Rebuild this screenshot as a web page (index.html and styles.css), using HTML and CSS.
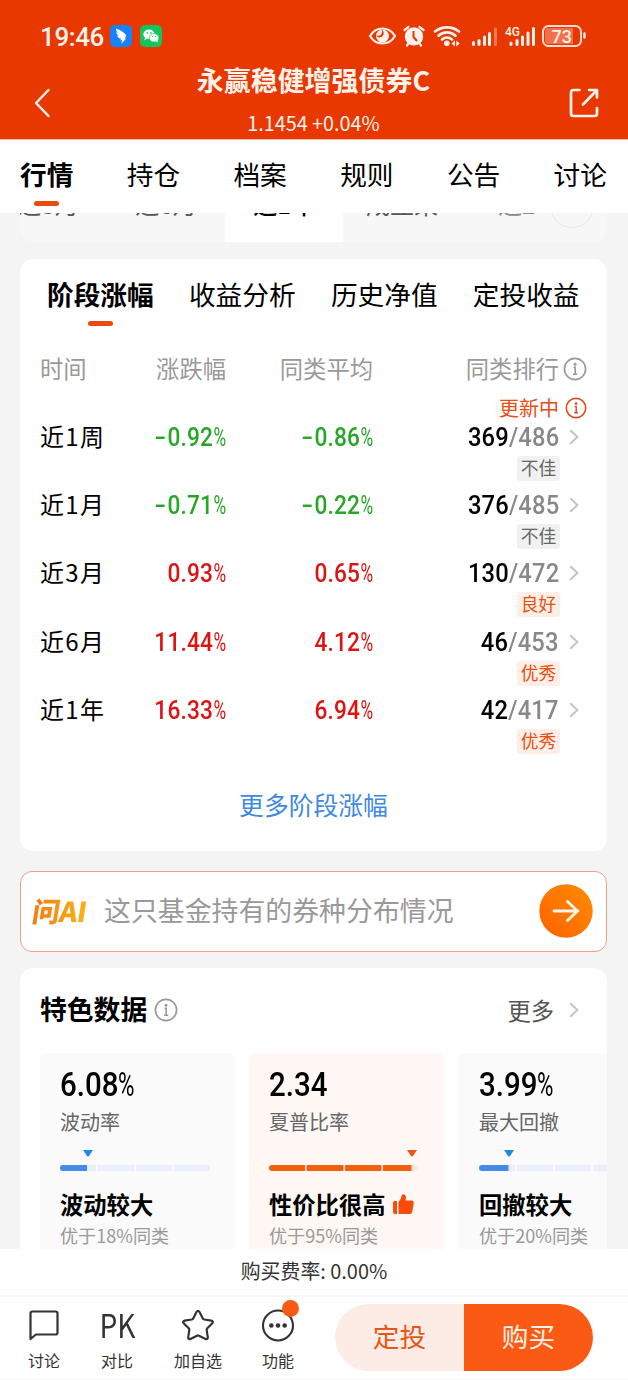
FILE: index.html
```html
<!DOCTYPE html>
<html lang="zh-CN">
<head>
<meta charset="utf-8">
<title>永赢稳健增强债券C</title>
<link rel="stylesheet" href="styles.css">
</head>
<body>
<svg class="defs" width="0" height="0">
  <symbol id="info" viewBox="0 0 24 24"><circle cx="12" cy="12" r="10.6" fill="none" stroke="currentColor" stroke-width="1.7"/><circle cx="12" cy="7.2" r="1.5" fill="currentColor"/><path d="M10.600 10.400H12.200v6.600M10 17.200h4.200" fill="none" stroke="currentColor" stroke-width="1.600"/></symbol>
  <symbol id="chev" viewBox="0 0 10 16"><path d="M1.2 1.2 8.4 8 1.2 14.8" fill="none" stroke="currentColor" stroke-width="2"/></symbol>
</svg>
<header class="top">
  <div class="status">
    <span class="clock">19:46</span>
    <svg class="app" viewBox="0 0 22 22"><rect width="22" height="22" rx="5" fill="#1683fb"/><path d="M6 3.4C10 5 15 7.600 16 10c.4 1.300-.6 2.400-1.400 3.400h1.600l-4.900 5.400.8-3.600h-1.700l.7-1.500C8.600 13.300 7.500 12 7.300 10.700l1.600.2C7.200 9.700 6.300 8.400 6.300 7l1.700.7C6.400 6.300 5.900 5 6 3.400z" fill="#fff"/></svg>
    <svg class="app app-chat" viewBox="0 0 22 22"><rect width="22" height="22" rx="5" fill="#14c55c"/><ellipse cx="9" cy="9.300" rx="5.600" ry="4.800" fill="#fff"/><path d="m5.200 12.500-.8 2.700 3-1.600z" fill="#fff"/><ellipse cx="14" cy="12.800" rx="4.900" ry="4.200" fill="#fff" stroke="#14c55c" stroke-width=".7"/><path d="m15.500 16 2.400 1.200-.5-2.200z" fill="#fff"/><g fill="#14c55c"><circle cx="7.200" cy="7.900" r=".8"/><circle cx="10.900" cy="7.900" r=".8"/><circle cx="12.500" cy="11.600" r=".7"/><circle cx="15.600" cy="11.600" r=".7"/></g></svg>
    <svg class="sys" width="220" height="26" viewBox="0 0 220 26">
      <path d="M2 13C8 3 21 3 27 13 21 23 8 23 2 13Z" fill="none" stroke="#fff2ea" stroke-width="2.200"/>
      <circle cx="14.500" cy="13" r="6.500" fill="#fff2ea"/><path d="M13.500 6.500a4.200 4.200 0 1 1-5.500 6q4 1.200 5.500-1.500 1-2 0-4.500z" fill="#e93700"/>
      <g fill="none" stroke="#fff2ea" stroke-linecap="round">
        <path d="m36.500 7 4-3M51.500 4l4 3M40.500 20.500l-1.500 2M51.500 20.500l1.500 2" stroke-width="2.200"/>
        <path d="M67 8.500c7-5.500 17-5.500 24 0M70.500 12.700c5-4.500 12-4.500 17 0M74 16.500c3-2.500 7-2.500 10 0" stroke-width="2.700"/>
      </g>
      <circle cx="46" cy="13.400" r="9.200" fill="#fff2ea"/><path d="M45.500 8v6l3.500 4" fill="none" stroke="#e93700" stroke-width="2"/>
      <circle cx="78.800" cy="20.300" r="2.800" fill="#fff2ea"/><path d="m83.500 20.500 3.500-3v6zM91.800 20.500l-3.500-3v6z" fill="#fff2ea"/>
      <g stroke="#fff2ea" stroke-width="3" stroke-linecap="round"><path d="M105.500 19.500v2M111 17.500v4M116.500 14v7.500M121.500 10.500v11"/><path d="M127.500 6v15.500" opacity=".35"/><path d="M143 20v1.500M149 17.500v4M154.500 14v7.500M160 10v11.500M165.500 5.500v16"/></g>
      <text x="137" y="13" class="net">4G</text>
      <rect x="175" y="3" width="38" height="20" rx="5.500" fill="none" stroke="#ffdccd" stroke-width="2"/><path d="M180 5h25v16h-25q-3 0-3-3V8q0-3 3-3z" fill="#f26f49"/><path d="M216.500 10.500v4" stroke="#fff2ea" stroke-width="2.400" stroke-linecap="round"/>
      <text x="193.700" y="19.500" class="batt">73</text>
    </svg>
  </div>
  <div class="titlebar">
    <svg class="back" width="18" height="30" viewBox="0 0 18 30"><path d="M15.500 2 3 15l12.500 13" fill="none" stroke="#fff2ea" stroke-width="2.500" stroke-linecap="round" stroke-linejoin="round"/></svg>
    <div class="heading"><h1>永赢稳健增强债券C</h1><p>1.1454 +0.04%</p></div>
    <svg class="share" width="30" height="30" viewBox="0 0 30 30"><path d="M10.500 2H4.500q-2.500 0-2.500 2.500v21q0 2.500 2.500 2.500h21q2.500 0 2.500-2.500V20M20 2h8v7.500M28 2 14 16.500" fill="none" stroke="#fff2ea" stroke-width="2.700" stroke-linecap="round" stroke-linejoin="round"/></svg>
  </div>
</header>
<nav class="tabs"><a class="on">行情</a><a>持仓</a><a>档案</a><a>规则</a><a>公告</a><a>讨论</a></nav>
<main class="scroll">
  <div class="range"><span>近3月</span><span>近6月</span><span class="on">近1年</span><span>成立来</span><span class="cut">近2年</span><i class="dial"></i></div>
  <section class="card perf">
    <nav class="subtabs"><a class="on">阶段涨幅</a><a>收益分析</a><a>历史净值</a><a>定投收益</a></nav>
    <div class="row head"><span>时间</span><span>涨跌幅</span><span>同类平均</span><span>同类排行</span><svg class="ic"><use href="#info"/></svg></div>
    <div class="updating"><span>更新中</span><svg class="ic"><use href="#info"/></svg></div>
    <div class="row"><span class="name">近<u>1</u>周</span><span class="num down"><s>-</s>0.92<i>%</i></span><span class="num down"><s>-</s>0.86<i>%</i></span><div class="rank"><span class="num"><b>369</b>/486</span><em>不佳</em></div><svg class="chev"><use href="#chev"/></svg></div>
    <div class="row"><span class="name">近<u>1</u>月</span><span class="num down"><s>-</s>0.71<i>%</i></span><span class="num down"><s>-</s>0.22<i>%</i></span><div class="rank"><span class="num"><b>376</b>/485</span><em>不佳</em></div><svg class="chev"><use href="#chev"/></svg></div>
    <div class="row"><span class="name">近<u>3</u>月</span><span class="num up">0.93<i>%</i></span><span class="num up">0.65<i>%</i></span><div class="rank"><span class="num"><b>130</b>/472</span><em class="good">良好</em></div><svg class="chev"><use href="#chev"/></svg></div>
    <div class="row"><span class="name">近<u>6</u>月</span><span class="num up">11.44<i>%</i></span><span class="num up">4.12<i>%</i></span><div class="rank"><span class="num"><b>46</b>/453</span><em class="good">优秀</em></div><svg class="chev"><use href="#chev"/></svg></div>
    <div class="row"><span class="name">近<u>1</u>年</span><span class="num up">16.33<i>%</i></span><span class="num up">6.94<i>%</i></span><div class="rank"><span class="num"><b>42</b>/417</span><em class="good">优秀</em></div><svg class="chev"><use href="#chev"/></svg></div>
    <a class="more-link">更多阶段涨幅</a>
  </section>
  <section class="ask">
    <span class="ai">问AI</span><span class="question">这只基金持有的券种分布情况</span>
    <svg class="go" width="54" height="54" viewBox="0 0 54 54"><defs><linearGradient id="og" x1="0" y1="1" x2="1" y2="0"><stop offset="0" stop-color="#ff6200"/><stop offset="1" stop-color="#ff8c00"/></linearGradient></defs><circle cx="27" cy="27" r="26.700" fill="url(#og)"/><path d="M15 27h24M28.500 17.500 38.500 27l-10 9.500" fill="none" stroke="#fff5e6" stroke-width="2.800" stroke-linecap="round" stroke-linejoin="round"/></svg>
  </section>
  <section class="card feature">
    <div class="fhead"><h2>特色数据</h2><svg class="ic"><use href="#info"/></svg><span class="fmore">更多</span><svg class="chev"><use href="#chev"/></svg></div>
    <div class="tiles">
      <article class="tile"><span class="big">6.08<i>%</i></span><span class="lab">波动率</span><svg class="meter" width="150" height="24" viewBox="0 0 150 24"><path d="M23 2h10l-4 6q-1 1-2 0z" fill="#1e8be8"/><path d="M3 17h33v6H3q-3 0-3-3t3-3zM38 17h36v6H38zM76 17h36v6H76zM114.500 17H147q3 0 3 3t-3 3h-32.500z" fill="#e8eefa"/><path d="M3 17h24v6H3q-3 0-3-3t3-3z" fill="#438cea"/></svg><strong>波动较大</strong><small>优于18%同类</small></article>
      <article class="tile warm"><span class="big">2.34</span><span class="lab">夏普比率</span><svg class="meter" width="150" height="24" viewBox="0 0 150 24"><path d="M138 2h10l-4 6q-1 1-2 0z" fill="#ee5518"/><path d="M142 17h5q3 0 3 3t-3 3h-5z" fill="#f8ebe7"/><path d="M3 17h33v6H3q-3 0-3-3t3-3zM37.500 17h37v6h-37zM76 17h36.500v6H76zM114 17h28.500v6H114z" fill="#f2600d"/></svg><strong>性价比很高<svg class="thumb" width="21" height="21" viewBox="0 0 21 21"><path d="M0 8.500Q0 7 1.500 7H4v13H2Q0 20 0 17.500zM5.500 20V8Q8 6 8.700 1.500 9.200 0 11 .4q3 1.200 1.500 6.100h6q2.500 0 2.300 2.500l-1.600 9q-.5 2-2.500 2z" fill="#fc4a08"/></svg></strong><small>优于95%同类</small></article>
      <article class="tile"><span class="big">3.99<i>%</i></span><span class="lab">最大回撤</span><svg class="meter" width="150" height="24" viewBox="0 0 150 24"><path d="M25 2h10l-4 6q-1 1-2 0z" fill="#1e8be8"/><path d="M3 17h33v6H3q-3 0-3-3t3-3zM38 17h36v6H38zM76 17h36v6H76zM114.500 17H147q3 0 3 3t-3 3h-32.500z" fill="#e8eefa"/><path d="M3 17h26.500v6H3q-3 0-3-3t3-3z" fill="#438cea"/></svg><strong>回撤较大</strong><small>优于20%同类</small></article>
    </div>
  </section>
</main>
<div class="fee">购买费率: 0.00%</div>
<footer class="bar">
  <a class="act"><svg width="34" height="34" viewBox="0 0 34 34"><path d="M5.500 2.500h23q2 0 2 2v19q0 2-2 2H9l-5.500 4.500V4.500q0-2 2-2z" fill="none" stroke="#333" stroke-width="2.200" stroke-linejoin="round"/></svg><span>讨论</span></a>
  <a class="act"><b class="pk">PK</b><span>对比</span></a>
  <a class="act wide"><svg width="34" height="34" viewBox="0 0 34 34"><path d="M15.500 3q1.500-2.500 3 0l3.200 6.300q.5 1 1.600 1.200l7 1.100q2.500.7 1 2.700l-5 5q-.8.8-.6 1.900l1.100 7.200q0 2.300-2.300 1.600L18 26.700q-1-.5-2 0l-6.500 3.300q-2.300.7-2.300-1.600l1.100-7.200q.2-1.100-.6-1.900l-5-5q-1.500-2 1-2.700l7-1.100q1.100-.2 1.600-1.200z" fill="none" stroke="#333" stroke-width="2.200"/></svg><span>加自选</span></a>
  <a class="act fn"><svg width="34" height="34" viewBox="0 0 34 34"><circle cx="17" cy="16.500" r="15" fill="none" stroke="#333" stroke-width="2.100"/><g fill="#333"><circle cx="10.300" cy="16.500" r="2.300"/><circle cx="17" cy="16.500" r="2.300"/><circle cx="23.700" cy="16.500" r="2.300"/></g></svg><i class="dot"></i><span>功能</span></a>
  <div class="cta"><a>定投</a><a class="buy">购买</a></div>
</footer>
</body>
</html>
```
FILE: styles.css
```css
* { box-sizing: border-box; margin: 0; padding: 0; }
body { width: 628px; height: 1380px; overflow: hidden; display: flex; flex-direction: column; background: #f4f4f4; color: #000; font-family: "Noto Sans CJK SC", sans-serif; }
i, em { font-style: normal; }
u, s { text-decoration: none; }
svg { display: block; flex: none; }
.defs { position: absolute; }
.ic { width: 24px; height: 24px; }
.chev { width: 10px; height: 16px; color: #c4c4c4; }

.top { height: 140px; flex: none; background: #e93700; border-bottom: 1px solid #f8b69e; color: #fff2ea; }
.status { height: 72px; padding: 0 40px; display: flex; align-items: center; }
.clock { width: 70px; font: 500 26px/30px Roboto, sans-serif; letter-spacing: -.4px; padding-top: 2px; }
.app { width: 22px; height: 22px; }
.app-chat { margin-left: 8px; }
.sys { margin: 0 0 0 206px; }
.net { font: 500 12px Roboto, sans-serif; fill: #fff2ea; }
.batt { font: 500 18px Roboto, sans-serif; fill: #fff2ea; text-anchor: middle; }
.titlebar { height: 66px; padding: 0 29px 0 33px; display: flex; justify-content: space-between; }
.back, .share { margin-top: 16px; }
.heading { text-align: center; padding-left: 7px; }
h1 { font-size: 26.900px; line-height: 36px; margin-top: -10px; font-weight: 700; letter-spacing: .1px; white-space: nowrap; }
.heading p { font-size: 19.800px; line-height: 28px; margin-top: 11px; }

.tabs { height: 73px; flex: none; background: #fff; display: flex; justify-content: space-between; padding: 15px 21px 0 20px; }
.tabs a { font-size: 26.700px; line-height: 38px; }
.on { font-weight: 700; }
.tabs .on::after, .subtabs .on::after { content: ""; display: block; width: 25px; height: 5px; border-radius: 3px; background: #ea4b0d; margin: 8px auto 0; }

.scroll { height: 1036px; flex: none; overflow: hidden; padding: 0 21px 0 20px; }
.range { height: 72px; margin-top: -43px; display: flex; position: relative; overflow: hidden; background: #f7f7f7; border-radius: 0 0 12px 12px; color: #555; }
.range span { flex: 0 0 118px; font-size: 24px; line-height: 67px; text-align: center; }
.range span:first-child { margin-left: -31px; }
.range .on { background: #fff; color: #000; font-weight: 500; }
.range .cut { text-align: left; padding-left: 37px; color: #888; }
.dial { position: absolute; right: 13px; top: 14px; width: 44px; height: 44px; border: 1px solid #e4e4e4; border-radius: 50%; background: #f7f7f7; box-shadow: 0 0 0 12px #f7f7f7; }
.card { background: #fff; border-radius: 13px; }
.perf { height: 592px; margin-top: 17px; padding: 16px 20px 0; }
.subtabs { display: flex; gap: 35.200px; padding-left: 7px; height: 78px; }
.subtabs a { font-size: 26.700px; line-height: 38px; }
.row { height: 68.200px; display: grid; grid-template-columns: 74px 112px 147px 186px 28px; text-align: right; line-height: 32px; }
.row.head { height: 42px; font-size: 23.300px; line-height: 31px; color: #999; }
.row.head span:first-child, .name { text-align: left; }
.name { font-size: 24px; line-height: 29px; }
.name u { display: inline-block; width: 16px; text-align: center; }
.head .ic { margin: 4px 0 0 4px; }
.updating { height: 26px; display: flex; justify-content: flex-end; gap: 6px; align-items: center; font-size: 20px; line-height: 24px; color: #e84b14; }
.updating span { margin-top: -1px; }
.updating .ic { width: 22px; height: 22px; }
.num { font: 500 25.500px/32px Roboto, sans-serif; display: block; transform: scaleX(.89); transform-origin: right; letter-spacing: .2px; }
.rank .num { transform: scaleX(.93); }
.num i, .big i { display: inline-block; font-weight: 400; transform: scaleX(.76); transform-origin: left; margin-right: -.175em; }
.num s { display: inline-block; transform: scaleX(1.500); transform-origin: right; margin-right: 1px; }
.num b { font-weight: 500; color: #000; }
.down { color: #27a728; }
.up { color: #dc1414; }
.rank { display: flex; flex-direction: column; align-items: flex-end; color: #888; }
.rank em { width: 43px; height: 25px; margin: 3px -1px 0 0; border-radius: 3px; background: #f1f1f1; color: #666; font-size: 17.800px; line-height: 22px; text-align: center; }
.rank .good { background: #fdeee8; color: #e8500f; }
.row .chev { margin: 8px 0 0 10px; }
.more-link { display: block; text-align: center; font-size: 24.800px; line-height: 36px; color: #4189e0; margin-top: 24px; }

.ask { height: 81px; margin-top: 20px; padding: 0 13px 0 12px; display: flex; align-items: center; background: #fff; border: 1px solid #ee9f85; border-radius: 12px; }
.ai { width: 71px; font: 900 27.500px/34px "Noto Sans CJK SC", sans-serif; letter-spacing: -.5px; margin-top: -3px; }
.ai { color: transparent; background: linear-gradient(90deg, #f47b14, #fdb515 80%); background-clip: text; transform: skewX(-9deg); }
.question { flex: 1; font-size: 26.900px; line-height: 38px; color: #999; white-space: nowrap; margin-top: -3px; }
.go { margin-top: -2px; }

.feature { height: 330px; margin-top: 16px; padding: 22px 0 0 20px; overflow: hidden; }
.fhead { display: flex; align-items: center; height: 40px; padding-right: 28px; }
h2 { font-size: 26.800px; line-height: 38px; font-weight: 700; margin-top: -2px; }
.fhead .ic { margin-left: 7px; color: #999; }
.fmore { margin: -1px 15px 0 auto; font-size: 23.300px; color: #555; }
.tiles { display: flex; gap: 14px; margin-top: 23px; }
.tile { flex: 0 0 195px; height: 230px; border-radius: 6px; background: #fafafa; padding: 12px 0 0 20px; display: flex; flex-direction: column; align-items: flex-start; }
.tile:last-child { padding-left: 21px; }
.big { font: 500 33.500px/40px Roboto, sans-serif; transform: scaleX(.88); transform-origin: left; }
.warm { background: #fff7f4; }
.lab { font-size: 20px; line-height: 30px; color: #666; margin-top: 2px; }
.meter { margin-top: 11px; }
.tile strong { font-size: 23.300px; line-height: 34px; margin-top: 15px; display: flex; align-items: center; gap: 8px; font-weight: 700; }
.tile small { font-size: 18.100px; line-height: 26px; margin-top: 1px; color: #999; }

.fee { height: 48px; flex: none; background: #fff; border-bottom: 2px solid #f6f6f6; text-align: center; font-size: 19.900px; line-height: 44px; color: #333; }
.bar { height: 83px; flex: none; background: #fff; border-bottom: 1px solid #f3f3f3; display: flex; padding: 7px 35px 0 12px; }
.act { width: 64px; margin-right: 9px; display: flex; flex-direction: column; align-items: center; position: relative; font-size: 16px; line-height: 24px; color: #333; padding-top: 5px; }
.act svg, .pk { margin-bottom: 5px; height: 34px; }
.wide { width: 80px; }
.pk { font: 400 32px/31px "Noto Sans CJK SC", sans-serif; transform: scaleX(.88); }
.act.fn { width: 62px; margin-right: 26px; }
.dot { position: absolute; right: 10px; top: -4px; width: 17px; height: 17px; border-radius: 50%; background: #fb5a14; }
.cta { flex: 1; height: 67px; display: flex; border-radius: 34px; overflow: hidden; font-size: 26.700px; line-height: 63px; text-align: center; }
.cta a { flex: 1; background: #fcece5; color: #e5571a; }
.cta .buy { background: #fb5a14; color: #fff2e6; }
```
